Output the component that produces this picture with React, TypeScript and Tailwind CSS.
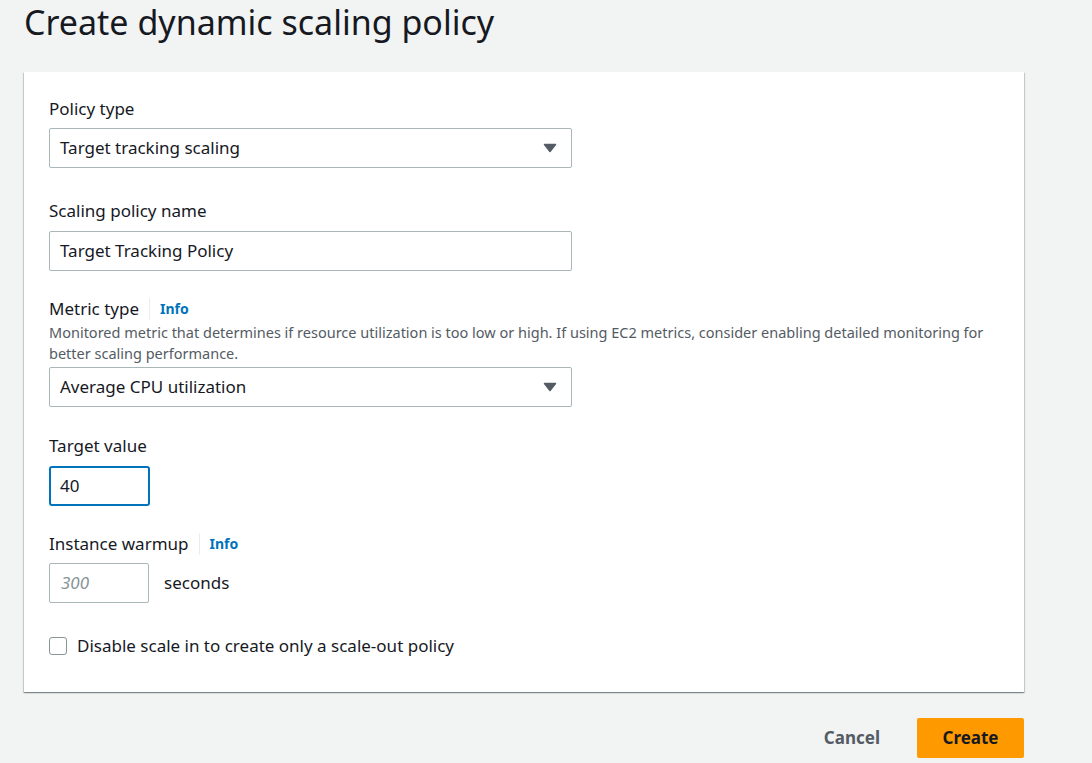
import React from "react";

const font = { fontFamily: '"Noto Sans", "Open Sans", Arial, sans-serif' };

function Caret() {
  return (
    <svg width="14" height="10" viewBox="0 0 14 10" className="shrink-0">
      <path d="M1.5 1.5 L12.5 1.5 L7 8.5 Z" fill="#545b64" stroke="#545b64" strokeWidth="1.5" strokeLinejoin="round" />
    </svg>
  );
}

function Label({ children, info }: { children: React.ReactNode; info?: boolean }) {
  return (
    <div className="flex items-center text-[17px] leading-[22px] text-[#16191f]">
      <span>{children}</span>
      {info && (
        <>
          <span className="mx-[10px] h-[22px] w-px bg-[#eaeded]" />
          <span className="text-[14px] font-bold text-[#0073bb]">Info</span>
        </>
      )}
    </div>
  );
}

export default function App() {
  return (
    <div className="min-h-[763px] w-full bg-[#f2f3f3]" style={font}>
      <div className="w-[1024px] pl-[24px]">
        <h1 className="h-[72px] pt-[1px] text-[34px] leading-[42px] text-[#16191f]">
          Create dynamic scaling policy
        </h1>
        <div className="bg-white px-[25px] pt-[26px] pb-[35px] shadow-[0_1px_1px_0_rgba(0,28,36,0.3),1px_1px_1px_0_rgba(0,28,36,0.15),-1px_1px_1px_0_rgba(0,28,36,0.15)]">
          <div className="flex flex-col">
            <Label>Policy type</Label>
            <div className="mt-[8px] flex h-[40px] w-[523px] items-center justify-between rounded-[2px] border border-[#aab7b8] pl-[10px] pr-[14px] text-[17px] text-[#16191f]">
              <span className="-mt-[1px]">Target tracking scaling</span>
              <Caret />
            </div>

            <div className="mt-[32px]">
              <Label>Scaling policy name</Label>
            </div>
            <div className="mt-[9px] flex h-[40px] w-[523px] items-center rounded-[2px] border border-[#aab7b8] pl-[10px] text-[17px] text-[#16191f]">
              Target Tracking Policy
            </div>

            <div className="mt-[27px]">
              <Label info>Metric type</Label>
            </div>
            <p className="mt-[2px] w-[950px] text-[14.5px] leading-[21px] text-[#545b64]">
              Monitored metric that determines if resource utilization is too low or high. If using EC2 metrics, consider enabling detailed monitoring for better scaling performance.
            </p>
            <div className="mt-[3px] flex h-[40px] w-[523px] items-center justify-between rounded-[2px] border border-[#aab7b8] pl-[10px] pr-[14px] text-[17px] text-[#16191f]">
              <span className="-mt-[1px]">Average CPU utilization</span>
              <Caret />
            </div>

            <div className="mt-[28px]">
              <Label>Target value</Label>
            </div>
            <div className="mt-[9px] flex h-[40px] w-[101px] items-center rounded-[3px] border-2 border-[#0073bb] pl-[9px] text-[17px] text-[#16191f]">
              40
            </div>

            <div className="mt-[27px]">
              <Label info>Instance warmup</Label>
            </div>
            <div className="mt-[8px] flex items-center">
              <div className="flex h-[40px] w-[100px] items-center rounded-[2px] border border-[#aab7b8] pl-[11px] text-[17px] italic text-[#879596]">
                300
              </div>
              <span className="ml-[15px] -mt-[1px] text-[17px] text-[#16191f]">seconds</span>
            </div>

            <label className="mt-[32px] flex items-center text-[17px] leading-[22px] text-[#16191f]">
              <span className="mr-[10px] h-[18px] w-[18px] rounded-[3px] border border-[#879596] bg-white" />
              Disable scale in to create only a scale-out policy
            </label>
          </div>
        </div>
        <div className="mt-[26px] flex items-center justify-end">
          <button className="mr-[37px] text-[17px] font-bold leading-[22px] text-[#545b64]">Cancel</button>
          <button className="h-[40px] w-[107px] rounded-[2px] bg-[#ff9900] text-[17px] font-bold text-[#16191f]">
            Create
          </button>
        </div>
      </div>
    </div>
  );
}
